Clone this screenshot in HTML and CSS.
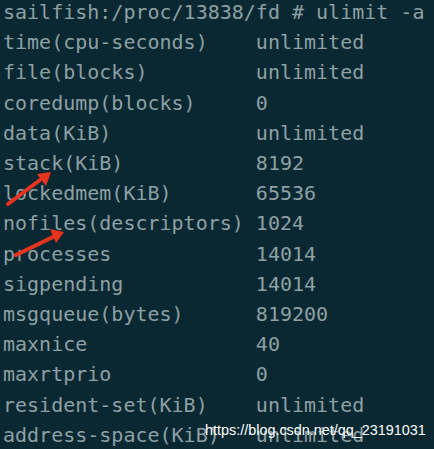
FILE: index.html
```html
<!DOCTYPE html>
<html>
<head>
<meta charset="utf-8">
<link rel="stylesheet" href="styles.css">
</head>
<body>
<div class="term">
  <div class="line">sailfish:/proc/13838/fd # ulimit -a</div>
  <div class="row"><span class="k">time(cpu-seconds)</span><span>unlimited</span></div>
  <div class="row"><span class="k">file(blocks)</span><span>unlimited</span></div>
  <div class="row"><span class="k">coredump(blocks)</span><span>0</span></div>
  <div class="row"><span class="k">data(KiB)</span><span>unlimited</span></div>
  <div class="row"><span class="k">stack(KiB)</span><span>8192</span></div>
  <div class="row"><span class="k">lockedmem(KiB)</span><span>65536</span></div>
  <div class="row"><span class="k">nofiles(descriptors)</span><span>1024</span></div>
  <div class="row"><span class="k">processes</span><span>14014</span></div>
  <div class="row"><span class="k">sigpending</span><span>14014</span></div>
  <div class="row"><span class="k">msgqueue(bytes)</span><span>819200</span></div>
  <div class="row"><span class="k">maxnice</span><span>40</span></div>
  <div class="row"><span class="k">maxrtprio</span><span>0</span></div>
  <div class="row"><span class="k">resident-set(KiB)</span><span>unlimited</span></div>
  <div class="row"><span class="k">address-space(KiB)</span><span>unlimited</span></div>
  <svg class="arrows" width="434" height="449" viewBox="0 0 434 449">
    <path d="M8 204 L44 177" stroke="#e8331f" stroke-width="4" stroke-linecap="round"/>
    <polygon points="51,172 37,174 46,186" fill="#e8331f"/>
    <path d="M16 255 L55 236" stroke="#e8331f" stroke-width="4" stroke-linecap="round"/>
    <polygon points="64,232 50,229 56,243" fill="#e8331f"/>
  </svg>
  <div class="wm">https://blog.csdn.net/qq_23191031</div>
</div>
</body>
</html>
```
FILE: styles.css
```css
html, body {
  margin: 0;
  padding: 0;
  background: #0a2832;
}
.term {
  position: relative;
  width: 434px;
  height: 449px;
  overflow: hidden;
  padding: 0 0 0 3px;
  box-sizing: border-box;
  font-family: "DejaVu Sans Mono", monospace;
  font-size: 20px;
  line-height: 30.2px;
  color: #8da0a4;
}
.line {
  margin-top: -3px;
}
.row {
  display: flex;
}
.k {
  width: 21ch;
  flex: none;
}
.arrows {
  position: absolute;
  left: 0;
  top: 0;
}
.wm {
  position: absolute;
  left: 205px;
  top: 420px;
  font-family: "Liberation Sans", Arial, sans-serif;
  font-size: 14.4px;
  line-height: 20px;
  color: #ffffff;
}
```
